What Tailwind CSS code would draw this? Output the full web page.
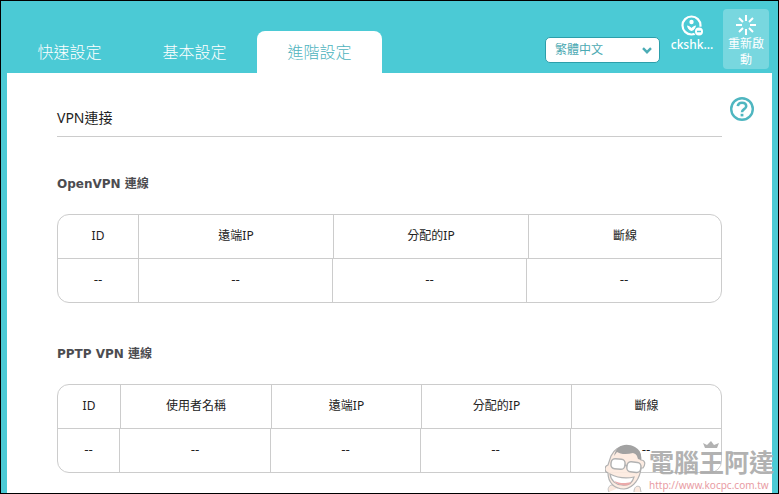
<!DOCTYPE html>
<html lang="zh-Hant">
<head>
<meta charset="utf-8">
<meta name="viewport" content="width=device-width, initial-scale=1">
<title>VPN連接</title>
<script src="https://cdn.jsdelivr.net/npm/@tailwindcss/browser@4"></script>
</head>
<body class="relative flex min-h-screen flex-col overflow-x-hidden border border-black bg-[#4bcad5] font-['Noto_Sans','Noto_Sans_CJK_TC',sans-serif] text-xs text-[#222]">
  <header class="flex h-[72px] shrink-0 items-end justify-between pr-2 pl-1.5">
    <nav class="flex text-base font-light text-white">
      <a href="#" class="flex h-[42px] w-[125px] items-center justify-center">快速設定</a>
      <a href="#" class="flex h-[42px] w-[125px] items-center justify-center">基本設定</a>
      <a href="#" aria-current="page" class="flex h-[42px] w-[125px] items-center justify-center rounded-t-lg bg-white text-[#4db3bd]">進階設定</a>
    </nav>
    <div class="flex h-16 items-start">
      <div class="relative mt-7 mr-[7px] w-[115px]">
        <select aria-label="語言" class="h-[26px] w-full appearance-none rounded-[5px] border border-[#2c9fab] bg-white pl-[9px] text-xs text-[#4ba9b2]">
          <option>繁體中文</option>
        </select>
        <svg class="pointer-events-none absolute top-2.5 right-2 h-[7px] w-[10px]" viewBox="0 0 10 7" fill="none" stroke="#4bacb5" stroke-width="2.4"><path d="M1 1.200 5 5.200 9 1.200"/></svg>
      </div>
      <a href="#" class="flex w-[50px] flex-col items-center pt-1.5 font-medium text-white">
        <svg class="h-[22px] w-6" viewBox="0 0 24 22" fill="none"><circle cx="11.5" cy="10.5" r="9" stroke="white" stroke-width="2.2"/><circle cx="11.5" cy="7" r="2.2" fill="white"/><path d="M7 10.500c1.500.2 3.200 1.200 4.500 2.500 1.300-1.300 3-2.300 4.500-2.500 0 2-1.800 4.800-4.500 5.500-2.700-.7-4.500-3.500-4.500-5.500Z" fill="white"/><circle cx="19" cy="16.500" r="5" fill="#4bcad5"/><circle cx="19" cy="16.500" r="4" fill="white"/><path d="M17 16.500h4" stroke="#4bcad5" stroke-width="1.500"/></svg>
        <span class="leading-4">ckshk...</span>
      </a>
      <button type="button" class="mr-px ml-1.5 flex h-[60px] w-[46px] flex-col items-center rounded bg-white/25 pt-1.5 text-white">
        <svg class="mb-px h-5 w-5 shrink-0" viewBox="0 0 20 20" stroke="white" stroke-width="2"><path d="M10 0v6M10 14v6M0 10h6M14 10h6M3 3l4 4M13 13l4 4M17 3l-4 4M7 13l-4 4"/></svg>
        <span class="w-9 leading-4">重新啟動</span>
      </button>
    </div>
  </header>

  <main class="mr-1.5 ml-1.5 flex grow flex-col bg-white pr-[18px] pl-[50px]">
    <div class="flex items-start justify-between">
      <h1 class="mt-[34px] w-full border-b border-[#ccc] pb-[7px] text-sm leading-[22px]">VPN連接</h1>
      <a href="#" aria-label="說明" class="mt-6 ml-2 shrink-0">
        <svg class="h-6 w-6" viewBox="0 0 24 24" fill="none" stroke="#4fb6c0"><circle cx="12" cy="12" r="10.800" stroke-width="2.400"/><path d="M7.800 9.200C8 6.900 9.700 5.700 12 5.700s4.200 1.300 4.200 3.500c0 3-4.200 2.900-4.200 6" stroke-width="2.600"/><path d="M12 16.800v2.600" stroke-width="2.800"/></svg>
      </a>
    </div>

    <section class="mt-[37px] mr-8">
      <h2 class="font-['DejaVu_Sans','Noto_Sans_CJK_TC',sans-serif] text-xs leading-5 font-bold text-[#4c4c50]">OpenVPN 連線</h2>
      <table class="mt-5 block rounded-xl border border-[#ccc] text-center">
        <thead class="block">
          <tr class="grid h-11 grid-cols-[81fr_195fr_195fr_192fr] divide-x divide-[#ccc] border-b border-[#ccc] leading-[42px]">
            <th class="font-normal">ID</th><th class="font-normal">遠端IP</th><th class="font-normal">分配的IP</th><th class="font-normal">斷線</th>
          </tr>
        </thead>
        <tbody class="block font-['DejaVu_Sans',sans-serif]">
          <tr class="grid h-[43px] grid-cols-[81fr_194fr_194fr_194fr] divide-x divide-[#ccc] leading-[42px]">
            <td>--</td><td>--</td><td>--</td><td>--</td>
          </tr>
        </tbody>
      </table>
    </section>

    <section class="mt-[41px] mr-8 mb-5">
      <h2 class="font-['DejaVu_Sans','Noto_Sans_CJK_TC',sans-serif] text-xs leading-5 font-bold text-[#4c4c50]">PPTP VPN 連線</h2>
      <table class="mt-5 block rounded-xl border border-[#ccc] text-center">
        <thead class="block">
          <tr class="grid h-11 grid-cols-[63fr_151fr_150fr_150fr_149fr] divide-x divide-[#ccc] border-b border-[#ccc] leading-[42px]">
            <th class="font-normal">ID</th><th class="font-normal">使用者名稱</th><th class="font-normal">遠端IP</th><th class="font-normal">分配的IP</th><th class="font-normal">斷線</th>
          </tr>
        </thead>
        <tbody class="block font-['DejaVu_Sans',sans-serif]">
          <tr class="grid h-[43px] grid-cols-[62fr_151fr_150fr_150fr_150fr] divide-x divide-[#ccc] leading-[42px]">
            <td>--</td><td>--</td><td>--</td><td>--</td><td>--</td>
          </tr>
        </tbody>
      </table>
    </section>
  </main>

  <div class="pointer-events-none absolute right-1 bottom-0 flex items-end opacity-90">
    <svg class="h-[50px] w-11" viewBox="0 0 44 50">
      <path d="M4 49c-2-3 0-7 3-7l6 3M29 49c0-5 3-7 6-5l1 5" fill="#fbe7dc" stroke="#bbb"/>
      <path d="M6 13C10 5 16 2 25 4c7 2 11 6 11 13 4 0 5 4 2 8-1 0-2 0-2 0-1 10-7 20-17 21C9 46 3 39 3 30c-4-1-4-7 0-8Z" fill="#fdeadf" stroke="#aaa" stroke-width="1.200"/>
      <path d="M9 13C11 2 21-1 30 4c5 3 7 7 6 13l-3-1c-1-4-2-5-5-6-7 2-13 1-16-1Z" fill="#999"/>
      <rect x="6" y="16" width="14" height="10" rx="4" fill="#fff" stroke="#aaa" stroke-width="1.500" transform="rotate(6 13 21)"/>
      <rect x="22" y="19" width="14" height="10" rx="4" fill="#fff" stroke="#aaa" stroke-width="1.500" transform="rotate(6 28 23)"/>
      <path d="M20 22l2 1" stroke="#aaa" stroke-width="1.500"/>
      <path d="M5 31c8 4 15 5 24 3-2 7-6 9-12 8-6 0-11-4-12-11Z" fill="#fff" stroke="#aaa" stroke-width="1.200"/>
      <path d="M9 38c5 2 10 3 17 1-2 4-5 4-9 3-3 0-6-2-8-4Z" fill="#e9a0a0"/>
    </svg>
    <div class="flex w-[125px] flex-col items-start whitespace-nowrap">
      <svg class="ml-[54px] h-2 w-4" viewBox="0 0 16 8"><path d="M2 7 0 2l4 2 4-4 3 4 5-2-2 5Z" fill="#aaa"/></svg>
      <span class="mb-1 font-['Noto_Sans_CJK_TC',sans-serif] text-[25px] leading-6 font-bold text-[#aaa]">電腦王阿達</span>
      <span class="font-['Noto_Sans',sans-serif] text-[10px] leading-4 text-[#e7929a]">http://www.kocpc.com.tw</span>
    </div>
  </div>
</body>
</html>
